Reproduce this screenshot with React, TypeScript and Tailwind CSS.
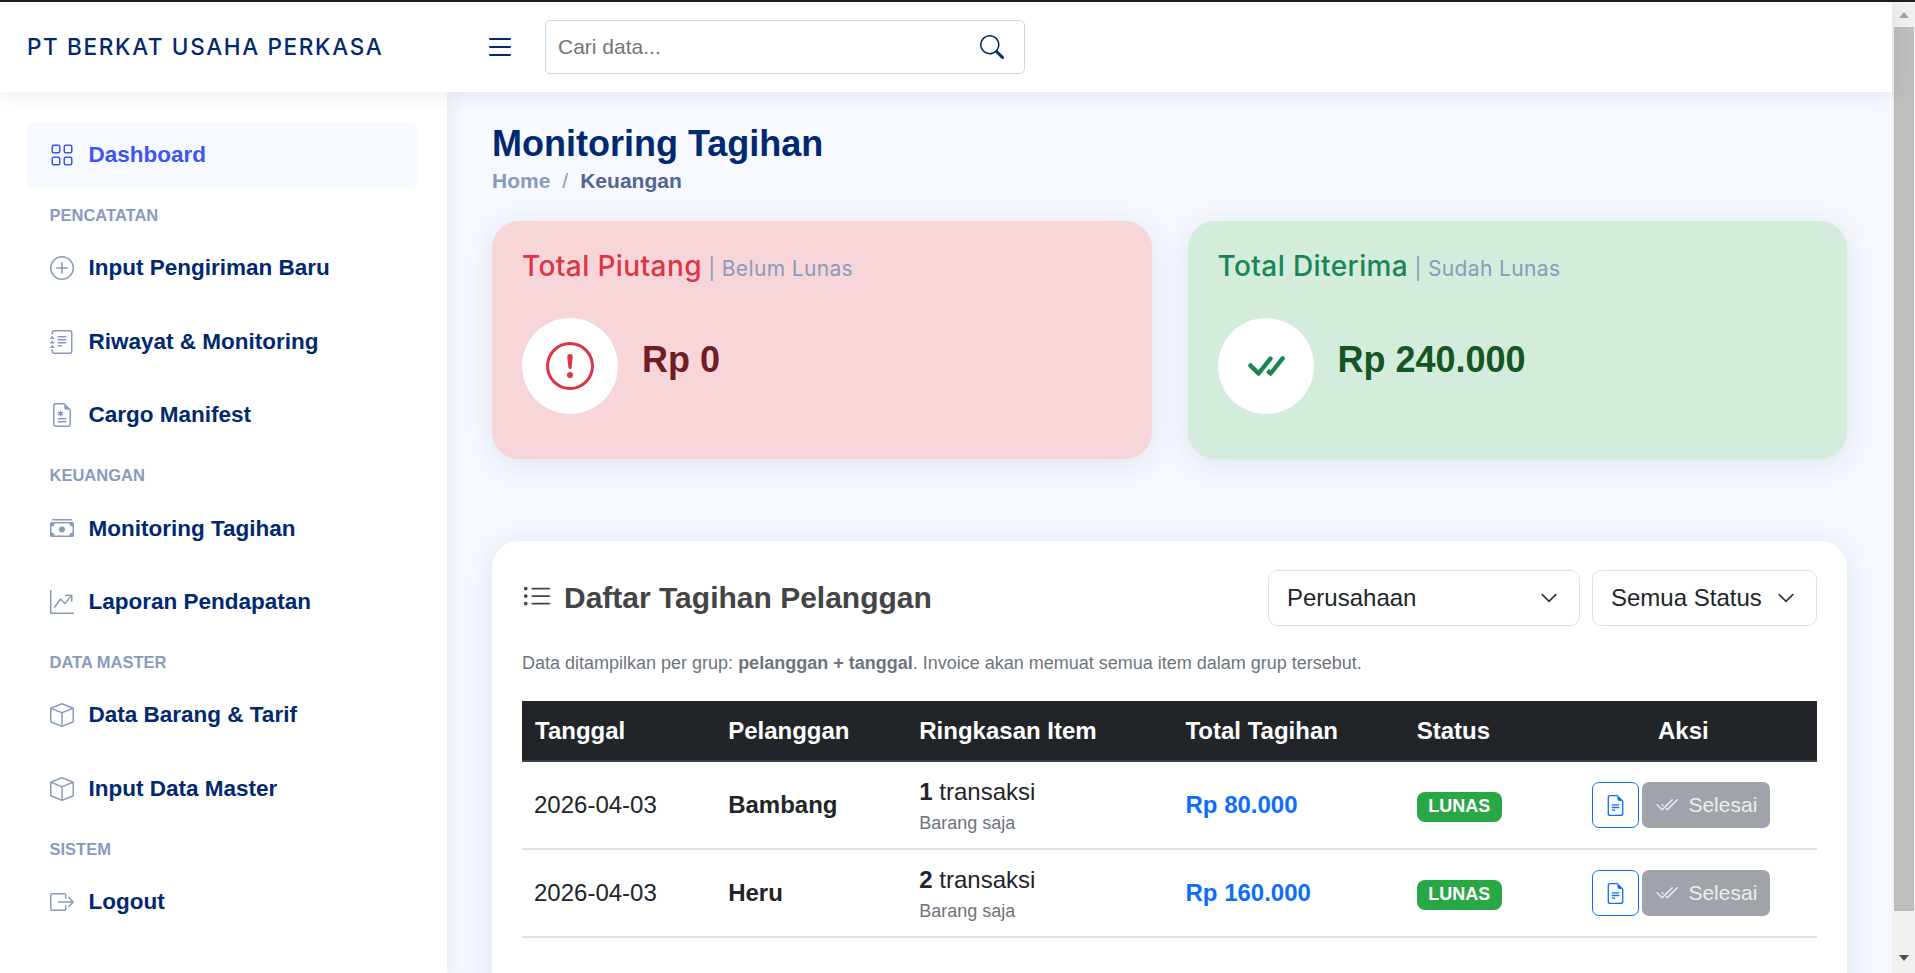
import {
  BsBox,
  BsBoxArrowRight,
  BsCashStack,
  BsCheck2All,
  BsCheckAll,
  BsChevronDown,
  BsExclamationCircle,
  BsFileEarmarkMedical,
  BsFileEarmarkText,
  BsGraphUpArrow,
  BsGrid,
  BsJournalText,
  BsList,
  BsListUl,
  BsPlusCircle,
  BsSearch,
} from "react-icons/bs";
import type { IconType } from "react-icons";

type NavEntry = { heading: string } | { label: string; icon: IconType; active?: boolean };

const nav: NavEntry[] = [
  { label: "Dashboard", icon: BsGrid, active: true },
  { heading: "Pencatatan" },
  { label: "Input Pengiriman Baru", icon: BsPlusCircle },
  { label: "Riwayat & Monitoring", icon: BsJournalText },
  { label: "Cargo Manifest", icon: BsFileEarmarkMedical },
  { heading: "Keuangan" },
  { label: "Monitoring Tagihan", icon: BsCashStack },
  { label: "Laporan Pendapatan", icon: BsGraphUpArrow },
  { heading: "Data Master" },
  { label: "Data Barang & Tarif", icon: BsBox },
  { label: "Input Data Master", icon: BsBox },
  { heading: "Sistem" },
  { label: "Logout", icon: BsBoxArrowRight },
];

const rows = [
  { date: "2026-04-03", name: "Bambang", count: 1, total: "Rp 80.000" },
  { date: "2026-04-03", name: "Heru", count: 2, total: "Rp 160.000" },
];

function Sidebar() {
  return (
    <aside className="w-[447px] shrink-0 bg-white px-[27px] pt-[30px] shadow-[0_0_20px_rgba(1,41,112,0.1)]">
      <div className="w-[390px]">
        {nav.map((entry) =>
          "heading" in entry ? (
            <div
              key={entry.heading}
              className="flex h-[39.7px] items-center pl-[22.5px] text-[16.5px] font-bold uppercase text-[#899bbd]"
            >
              {entry.heading}
            </div>
          ) : (
            <a
              key={entry.label}
              className={`mb-[7.5px] flex h-[66px] items-center gap-[15px] rounded-[7px] pl-[22.5px] text-[22.5px] font-bold ${
                entry.active ? "bg-[#f6f9ff] text-[#4154f1]" : "text-[#012970]"
              }`}
            >
              <entry.icon className={`size-6 ${entry.active ? "text-[#4154f1]" : "text-[#899bbd]"}`} />
              {entry.label}
            </a>
          ),
        )}
      </div>
    </aside>
  );
}

function SummaryCard(props: {
  title: string;
  sub: string;
  value: string;
  bg: string;
  titleColor: string;
  valueColor: string;
  children: React.ReactNode;
}) {
  return (
    <div className={`h-[238px] flex-1 rounded-[27px] p-[30px] shadow-[0_5px_30px_rgba(1,41,112,0.1)] ${props.bg}`}>
      <div className="font-['Inter',sans-serif] leading-[30px]">
        <span className={`text-[28px] font-medium tracking-[0.4px] ${props.titleColor}`}>{props.title}</span>
        <span className="text-[21px] tracking-[0.35px] text-[#899bbd]"> | {props.sub}</span>
      </div>
      <div className="mt-[33px] flex items-start gap-[24px]">
        <div className="flex size-24 items-center justify-center rounded-full bg-white">{props.children}</div>
        <div className={`mt-[20px] text-[36px] leading-[44px] font-bold ${props.valueColor}`}>{props.value}</div>
      </div>
    </div>
  );
}

function FilterBox({ label, width }: { label: string; width: string }) {
  return (
    <div
      className={`flex h-14 items-center justify-between rounded-[9px] border border-[#dee2e6] bg-white pr-[21px] pl-[18px] text-[24px] text-[#212529] ${width}`}
    >
      {label}
      <BsChevronDown className="size-[18px]" strokeWidth={0.6} />
    </div>
  );
}

export default function App() {
  return (
    <div className="flex h-screen flex-col overflow-hidden bg-[#f6f9ff] font-['Liberation_Sans',Arial,sans-serif]">
      <div className="h-[2px] shrink-0 bg-[#1f1f1f]" />
      <div className="flex min-h-0 flex-1">
        <div className="flex min-w-0 flex-1 flex-col">
          <header className="relative z-10 flex h-[90px] shrink-0 items-center bg-white shadow-[0_2px_20px_rgba(1,41,112,0.1)]">
            <div className="ml-[27px] w-[457px] font-['Inter',sans-serif] text-[22.5px] font-medium tracking-[1.66px] text-[#012970]">
              PT BERKAT USAHA PERKASA
            </div>
            <BsList className="size-8 text-[#012970]" />
            <div className="ml-[29px] flex h-[54px] w-[480px] items-center justify-between rounded-[5px] border border-[#cdd5e3] pr-[20px] pl-3 text-[21px] text-[#757575]">
              Cari data...
              <BsSearch className="size-6 text-[#012970]" />
            </div>
          </header>

          <div className="flex min-h-0 flex-1">
            <Sidebar />
            <main className="min-w-0 flex-1 pt-[29px] pr-[45px] pl-[45px]">
              <h1 className="text-[36px] leading-[46px] font-bold text-[#012970]">Monitoring Tagihan</h1>
              <div className="mt-[1px] text-[21px] leading-[25px] font-bold text-[#899bbd]">
                Home<span className="mx-[12px] font-normal">/</span>
                <span className="text-[#51678f]">Keuangan</span>
              </div>

              <div className="mt-[28px] flex gap-[36px]">
                <SummaryCard
                  title="Total Piutang"
                  sub="Belum Lunas"
                  value="Rp 0"
                  bg="bg-[#f7d5d8]"
                  titleColor="text-[#dc3545]"
                  valueColor="text-[#721c24]"
                >
                  <BsExclamationCircle className="size-12 text-[#dc3545]" />
                </SummaryCard>
                <SummaryCard
                  title="Total Diterima"
                  sub="Sudah Lunas"
                  value="Rp 240.000"
                  bg="bg-[#d4ecdb]"
                  titleColor="text-[#198754]"
                  valueColor="text-[#155724]"
                >
                  <BsCheckAll className="size-12 text-[#198754]" />
                </SummaryCard>
              </div>

              <section className="mt-[82px] rounded-[27px] bg-white px-[30px] pt-[29px] pb-[90px] shadow-[0_5px_30px_rgba(1,41,112,0.1)]">
                <div className="flex h-14 items-center justify-between">
                  <h2 className="mb-[2px] flex items-center gap-3 text-[30px] font-bold text-[#444444]">
                    <BsListUl className="size-[30px]" />
                    Daftar Tagihan Pelanggan
                  </h2>
                  <div className="flex gap-[12px]">
                    <FilterBox label="Perusahaan" width="w-[312px]" />
                    <FilterBox label="Semua Status" width="w-[225px]" />
                  </div>
                </div>

                <p className="mt-[24px] text-[18px] leading-[27px] text-[#6c757d]">
                  Data ditampilkan per grup: <b>pelanggan + tanggal</b>. Invoice akan memuat semua item dalam grup
                  tersebut.
                </p>

                <table className="mt-[24px] w-full table-fixed border-collapse text-[24px] text-[#212529]">
                  <colgroup>
                    <col className="w-[194px]" />
                    <col className="w-[191px]" />
                    <col className="w-[266px]" />
                    <col className="w-[231px]" />
                    <col className="w-[145px]" />
                    <col className="w-[267px]" />
                  </colgroup>
                  <thead>
                    <tr className="h-[60px] border-b-2 border-[#3c4043] bg-[#212529] text-left text-white">
                      <th className="pl-[13px]">Tanggal</th>
                      <th className="pl-[12px]">Pelanggan</th>
                      <th className="pl-[12px]">Ringkasan Item</th>
                      <th className="pl-[12px]">Total Tagihan</th>
                      <th className="pl-[12px]">Status</th>
                      <th className="text-center">Aksi</th>
                    </tr>
                  </thead>
                  <tbody>
                    {rows.map((row) => (
                      <tr key={row.name} className="h-[88px] border-b-2 border-[#dee2e6]">
                        <td className="pl-[12px]">{row.date}</td>
                        <td className="pl-[12px] font-bold">{row.name}</td>
                        <td className="pl-[12px]">
                          <div className="pt-[3px] leading-[30px]">
                            <b>{row.count}</b> transaksi
                          </div>
                          <div className="mt-[3px] text-[18px] leading-[27px] text-[#6c757d]">Barang saja</div>
                        </td>
                        <td className="pl-[12px] font-bold text-[#0d6efd]">{row.total}</td>
                        <td className="pl-[12px]">
                          <span className="mb-[2px] inline-flex h-[30px] w-[85px] items-center justify-center rounded-[8px] bg-[#28a745] text-[18px] font-bold text-white">
                            LUNAS
                          </span>
                        </td>
                        <td>
                          <div className="flex items-center justify-center gap-[3px] pr-[4px]">
                            <button className="flex h-[46px] w-[47px] items-center justify-center rounded-[7px] border border-[#0d6efd] text-[#0d6efd]">
                              <BsFileEarmarkText className="size-[21px]" />
                            </button>
                            <button className="flex h-[46px] w-[128px] items-center justify-center gap-[10px] rounded-[7px] bg-[#a0a4aa] text-[21px] text-[#eceef0]">
                              <BsCheck2All className="size-[23px]" />
                              Selesai
                            </button>
                          </div>
                        </td>
                      </tr>
                    ))}
                  </tbody>
                </table>
              </section>
            </main>
          </div>
        </div>

        {/* browser scrollbar */}
        <div className="flex w-[23px] shrink-0 flex-col bg-[#f1f1f1]">
          <div className="flex h-[25px] shrink-0 items-center justify-center">
            <div className="size-0 border-x-[5px] border-b-[6px] border-x-transparent border-b-[#a3a3a3]" />
          </div>
          <div className="ml-[2px] mr-[1px] h-[884px] shrink-0 bg-[#bebebe]" />
          <div className="mt-auto flex h-[25px] shrink-0 items-center justify-center pb-[6px]">
            <div className="size-0 border-x-[5px] border-t-[6px] border-x-transparent border-t-[#505050]" />
          </div>
        </div>
      </div>
    </div>
  );
}
